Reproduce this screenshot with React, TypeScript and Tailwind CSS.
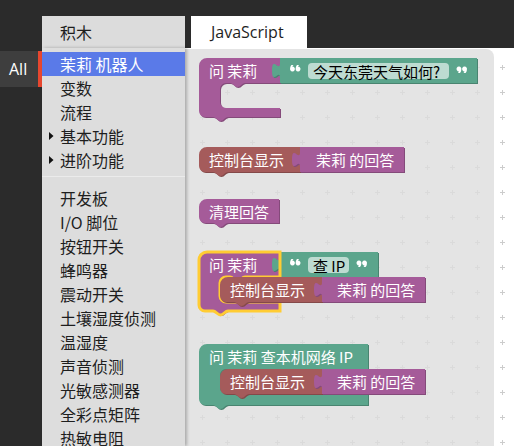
import type { ReactNode } from 'react'

const C = {
  purple: '#a55b99',
  purpleDark: '#844a7a',
  green: '#5ba58c',
  greenDark: '#498470',
  brown: '#a55b5b',
  brownDark: '#844949',
}

// blockly-ish shapes, flyout coordinates
const stackPath = (x: number, y: number, w: number, h: number) =>
  `M${x},${y + 8} a8,8 0 0 1 8,-8 H${x + w} V${y + h} H${x + 29} c-3,0 -4.5,4 -7.5,4 c-3,0 -4.5,-4 -7.5,-4 H${x + 6} a6,6 0 0 1 -6,-6 Z`

const valuePath = (x: number, y: number, w: number, h: number) =>
  `M${x},${y} H${x + w} V${y + h} H${x} V${y + 20} c0,-10 -8,8 -8,-7.5 s8,2.5 8,-7.5 Z`

const cPath = (x: number, y: number, w: number, h1: number, ix: number, hi: number, ha: number, aw: number) =>
  `M${x},${y + 8} a8,8 0 0 1 8,-8 H${x + w} V${y + h1} H${ix + 25} c-3,0 -4.5,4 -7.5,4 c-3,0 -4.5,-4 -7.5,-4 H${ix + 6} a6,6 0 0 0 -6,6 V${y + h1 + hi - 6} a6,6 0 0 0 6,6 H${x + aw} V${y + h1 + hi + ha} H${x + 29} c-3,0 -4.5,4 -7.5,4 c-3,0 -4.5,-4 -7.5,-4 H${x + 6} a6,6 0 0 1 -6,-6 Z`

const Shape = ({ d, fill, dark }: { d: string; fill: string; dark: string }) => (
  <>
    <path d={d} fill={dark} transform="translate(1,1)" />
    <path d={d} fill={fill} />
  </>
)

const Label = ({ x, y, h = 25, children }: { x: number; y: number; h?: number; children: ReactNode }) => (
  <div
    className="absolute flex items-center text-[15px] leading-none text-white whitespace-nowrap"
    style={{ left: x, top: y, height: h }}
  >
    {children}
  </div>
)

const quoteMark = 'M2.4,8 a2.4,2.4 0 1 1 0.1,0 Z M0.1,5.4 C0.1,2.6 1.6,0.8 4,0 L4.5,1 C3,1.7 2.3,2.8 2.4,3.9 Z'

const QuoteIcon = ({ close }: { close?: boolean }) => (
  <svg width="11" height="8" viewBox="0 0 11 8" className="mt-[7px] shrink-0">
    <g fill="#fff" transform={close ? 'rotate(180 5.5 4)' : undefined}>
      <path d={quoteMark} transform="translate(0,-1.6)" />
      <path d={quoteMark} transform="translate(5.6,-1.6)" />
    </g>
  </svg>
)

// string block: “ [field] ”
const StringValue = ({ x, y, w, children }: { x: number; y: number; w: number; children: ReactNode }) => (
  <div className="absolute flex items-start h-[25px] gap-[7px]" style={{ left: x, top: y }}>
    <QuoteIcon />
    <span
      className="mt-[5px] flex items-center h-[16px] rounded-[4px] bg-[#bddbd1] pl-[5px] text-[15px] leading-none text-black whitespace-nowrap"
      style={{ width: w }}
    >
      {children}
    </span>
    <QuoteIcon close />
  </div>
)

const topCats = [
  { label: '茉莉 机器人', selected: true },
  { label: '变数' },
  { label: '流程' },
  { label: '基本功能', arrow: true },
  { label: '进阶功能', arrow: true },
]

const deviceCats = [
  '开发板',
  'I/O 脚位',
  '按钮开关',
  '蜂鸣器',
  '震动开关',
  '土壤湿度侦测',
  '温湿度',
  '声音侦测',
  '光敏感测器',
  '全彩点矩阵',
  '热敏电阻',
]

const CatItem = ({ label, selected, arrow }: { label: string; selected?: boolean; arrow?: boolean }) => (
  <div
    className={`h-[24px] flex items-center pl-[7px] text-[16px] leading-none whitespace-nowrap ${
      selected ? 'bg-[#5a7ae8] text-white' : 'text-[#1e1e1e]'
    }`}
  >
    <span className="w-[11px] flex items-center">
      {arrow && (
        <svg width="5" height="8" viewBox="0 0 5 8">
          <path d="M0,0 L4.5,4 L0,8 Z" fill="#111" />
        </svg>
      )}
    </span>
    {label}
  </div>
)

export default function App() {
  return (
    <div className="w-[514px] h-[446px] bg-[#2b2b2b] flex flex-col overflow-hidden font-['Noto_Sans_CJK_SC','Noto_Sans',sans-serif]">
      {/* tabs */}
      <div className="h-[48px] shrink-0 flex items-end pl-[42px] gap-[6px]">
        <div className="w-[143px] h-[32px] bg-[#dcdcdc] pl-[18px] flex items-center text-[16px] text-[#1e1e1e]">
          积木
        </div>
        <div className="w-[116px] h-[32px] bg-white pl-[20px] flex items-center text-[16px] text-[#1e1e1e] font-['Open_Sans',sans-serif]">
          JavaScript
        </div>
      </div>

      <div className="flex flex-1 min-h-0">
        {/* All */}
        <div className="w-[42px] shrink-0 pt-[3px]">
          <div className="h-[36px] flex">
            <div className="w-[38px] bg-[#3e3e3e] pl-[9px] flex items-center text-[16px] text-white font-['Open_Sans',sans-serif]">
              All
            </div>
            <div className="w-[4px] bg-[#e8472f]" />
          </div>
        </div>

        {/* category menu */}
        <div className="w-[143px] shrink-0 bg-[#dddddd] pt-[4px] relative z-10 shadow-[2px_0_3px_rgba(0,0,0,0.25)]">
          {topCats.map((c) => (
            <CatItem key={c.label} {...c} />
          ))}
          <div className="h-px bg-[#ebebeb] mt-[4px] mb-[9px]" />
          {deviceCats.map((c) => (
            <CatItem key={c} label={c} />
          ))}
        </div>

        {/* workspace */}
        <div className="flex-1 relative bg-white">
          <svg className="absolute inset-0" width="100%" height="100%">
            <defs>
              <pattern id="grid" width="25" height="25" x="5" y="7" patternUnits="userSpaceOnUse">
                <path d="M10,12.5 H15 M12.5,10 V15" stroke="#cccccc" strokeWidth="1" />
              </pattern>
            </defs>
            <rect width="100%" height="100%" fill="url(#grid)" />
          </svg>

          {/* flyout */}
          <div className="absolute left-0 top-px bottom-0 w-[309px] bg-[#dddddd]/80 rounded-tr-[8px]">
            <svg className="absolute inset-0" width="309" height="397">
              {/* 问 茉莉 + empty statement */}
              <Shape d={cPath(14, 9, 81, 25, 35, 25, 9, 81)} fill={C.purple} dark={C.purpleDark} />
              <Shape d={valuePath(95, 9, 197, 25)} fill={C.green} dark={C.greenDark} />

              {/* 控制台显示 */}
              <Shape d={stackPath(14, 98, 101, 25)} fill={C.brown} dark={C.brownDark} />
              <Shape d={valuePath(115, 98, 104, 25)} fill={C.purple} dark={C.purpleDark} />

              {/* 清理回答 */}
              <Shape d={stackPath(14, 150, 80, 24)} fill={C.purple} dark={C.purpleDark} />

              {/* 问 茉莉 查 IP (selected) */}
              <Shape d={cPath(14, 203, 81, 25, 35, 25, 9, 81)} fill={C.purple} dark={C.purpleDark} />
              <Shape d={valuePath(95, 203, 98, 25)} fill={C.green} dark={C.greenDark} />
              <path d={cPath(14, 203, 81, 25, 35, 25, 9, 81)} fill="none" stroke="#ffcc33" strokeWidth="3" />
              <Shape d={stackPath(35, 228, 102, 25)} fill={C.brown} dark={C.brownDark} />
              <Shape d={valuePath(137, 228, 103, 25)} fill={C.purple} dark={C.purpleDark} />

              {/* 问 茉莉 查本机网络 IP */}
              <Shape d={cPath(14, 295, 169, 25, 35, 25, 11, 169)} fill={C.green} dark={C.greenDark} />
              <Shape d={stackPath(35, 320, 102, 25)} fill={C.brown} dark={C.brownDark} />
              <Shape d={valuePath(137, 320, 103, 25)} fill={C.purple} dark={C.purpleDark} />
            </svg>

            <Label x={24} y={9}>问 茉莉</Label>
            <StringValue x={105} y={9} w={141}>今天东莞天气如何?</StringValue>

            <Label x={24} y={98}>控制台显示</Label>
            <Label x={131} y={98}>茉莉 的回答</Label>

            <Label x={24} y={150} h={24}>清理回答</Label>

            <Label x={24} y={203}>问 茉莉</Label>
            <StringValue x={105} y={203} w={41}>查 IP</StringValue>
            <Label x={45} y={228}>控制台显示</Label>
            <Label x={152} y={228}>茉莉 的回答</Label>

            <Label x={24} y={295}>问 茉莉 查本机网络 IP</Label>
            <Label x={45} y={320}>控制台显示</Label>
            <Label x={152} y={320}>茉莉 的回答</Label>
          </div>
        </div>
      </div>
    </div>
  )
}
